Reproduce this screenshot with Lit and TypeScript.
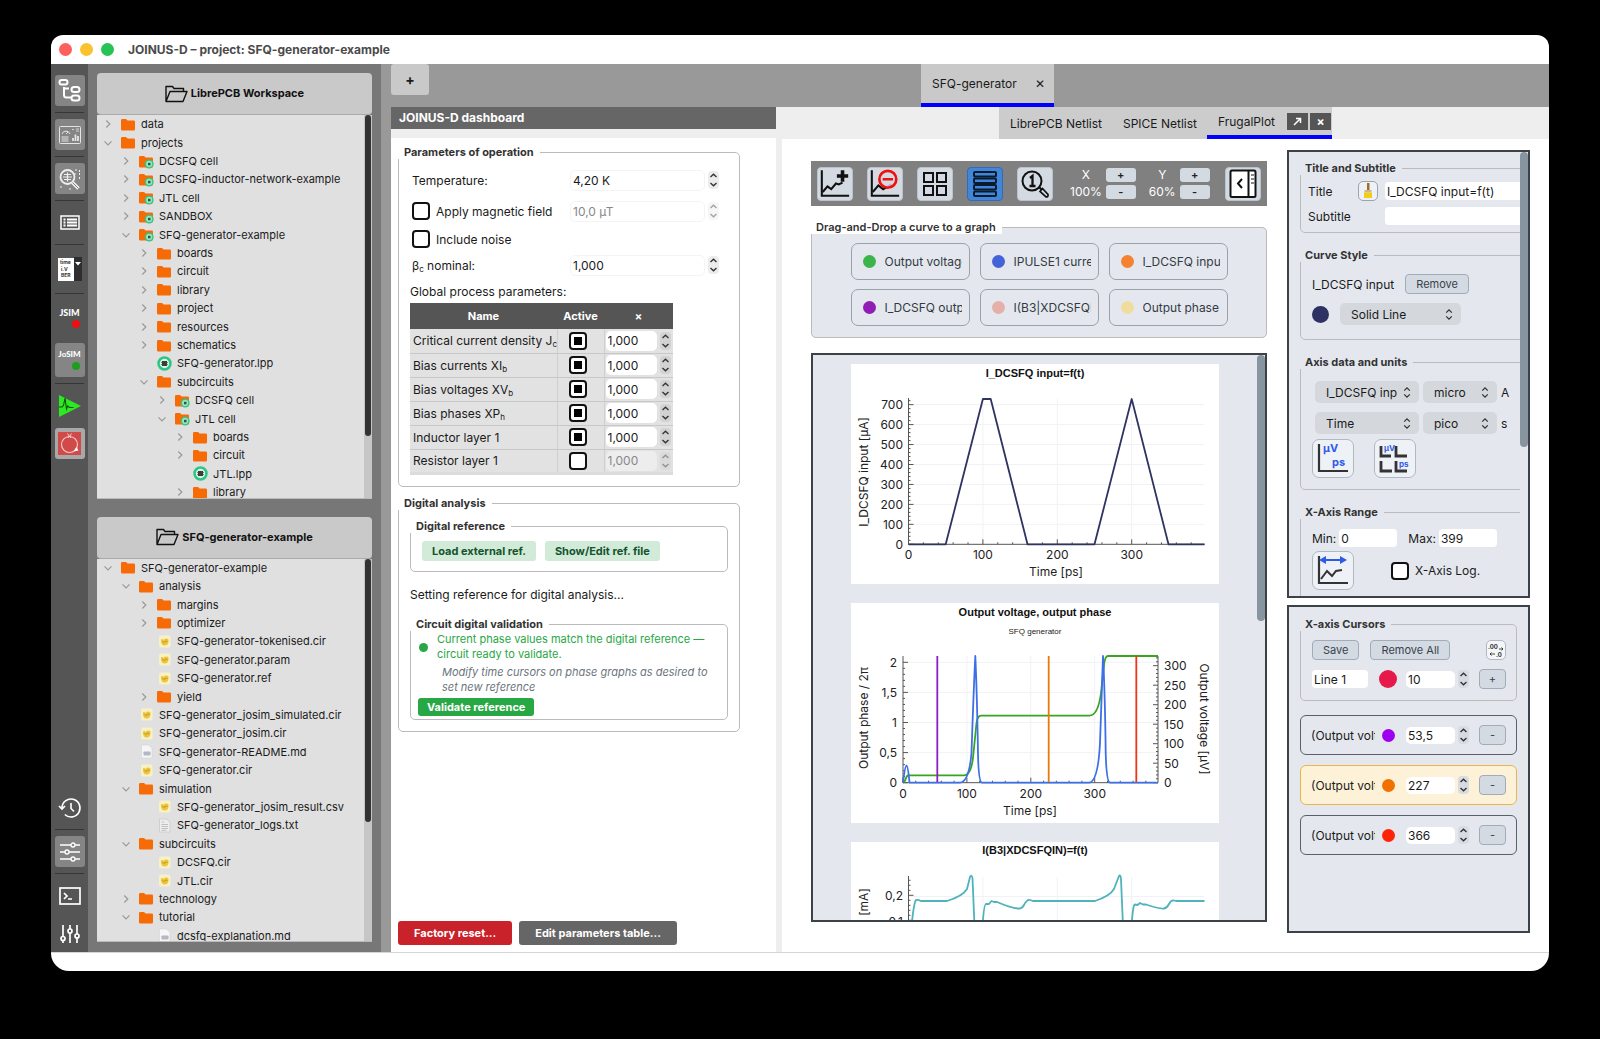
import { LitElement, html, svg, css, nothing } from "lit";
import { customElement } from "lit/decorators.js";
import { classMap } from "lit/directives/class-map.js";

type Kind = "folder" | "pcb" | "lpp" | "cir" | "md" | "txt";
interface Node { d: number; open?: boolean; kind: Kind; name: string }

const F = (d: number, name: string, open = false): Node => ({ d, name, open, kind: "folder" });
const P = (d: number, name: string, open = false): Node => ({ d, name, open, kind: "pcb" });
const L = (d: number, name: string, kind: Kind): Node => ({ d, name, kind });

const workspace: Node[] = [
  F(0, "data"), F(0, "projects", true), P(1, "DCSFQ cell"), P(1, "DCSFQ-inductor-network-example"),
  P(1, "JTL cell"), P(1, "SANDBOX"), P(1, "SFQ-generator-example", true), F(2, "boards"),
  F(2, "circuit"), F(2, "library"), F(2, "project"), F(2, "resources"), F(2, "schematics"),
  L(2, "SFQ-generator.lpp", "lpp"), F(2, "subcircuits", true), P(3, "DCSFQ cell"),
  P(3, "JTL cell", true), F(4, "boards"), F(4, "circuit"), L(4, "JTL.lpp", "lpp"), F(4, "library"),
];

const project: Node[] = [
  F(0, "SFQ-generator-example", true), F(1, "analysis", true), F(2, "margins"), F(2, "optimizer"),
  L(2, "SFQ-generator-tokenised.cir", "cir"), L(2, "SFQ-generator.param", "cir"), L(2, "SFQ-generator.ref", "cir"),
  F(2, "yield"), L(1, "SFQ-generator_josim_simulated.cir", "cir"), L(1, "SFQ-generator_josim.cir", "cir"),
  L(1, "SFQ-generator-README.md", "md"), L(1, "SFQ-generator.cir", "cir"), F(1, "simulation", true),
  L(2, "SFQ-generator_josim_result.csv", "cir"), L(2, "SFQ-generator_logs.txt", "txt"),
  F(1, "subcircuits", true), L(2, "DCSFQ.cir", "cir"), L(2, "JTL.cir", "cir"), F(1, "technology"),
  F(1, "tutorial", true), L(2, "dcsfq-explanation.md", "md"),
];

const folderShape = svg`<path d="M0 3.2Q0 2 1.2 2H5l1.6 1.6H12.8Q14 3.6 14 4.800V12.300Q14 13.500 12.800 13.500H1.200Q0 13.500 0 12.300Z" fill="#f76b07"/>`;

const kindIcon = (k: Kind) => {
  switch (k) {
    case "folder": return html`<svg viewBox="0 0 15 15">${folderShape}</svg>`;
    case "pcb": return html`<svg viewBox="0 0 15 15">${folderShape}<circle cx="10.200" cy="10" r="3.800" fill="#9be3bd" stroke="#2cc684" stroke-width="1.300"/><rect x="9" y="8.800" width="2.500" height="2.500" fill="#2d5a44"/></svg>`;
    case "lpp": return html`<svg viewBox="0 0 15 15"><circle cx="7.500" cy="7.500" r="6" fill="#d9f2e5" stroke="#2cc684" stroke-width="2.500"/><rect x="5" y="5" width="5" height="5" fill="#3a3f3c"/><path d="M4 6.500h7M4 8.500h7" stroke="#3a3f3c" stroke-width=".6"/></svg>`;
    case "cir": return html`<svg viewBox="0 0 15 15"><rect x="2" y="1.500" width="11.500" height="12" rx="2" fill="#f8f1c6"/><path d="M4 5.500Q5.500 4.500 6.500 6 9 3.500 11.500 5.500 12 8 10.500 10.500 7.500 12.500 5 10.500 3.500 8 4 5.500Z" fill="#ecc53d"/><path d="M5.500 7.500l1.500 1 2-1.500 1.500.5" fill="none" stroke="#b98a1c" stroke-width=".8"/></svg>`;
    case "md": return html`<svg viewBox="0 0 15 15"><path d="M2.500 1h7l3.500 3.500V14h-10.500Z" fill="#f6f6f6" stroke="#d4d4d4" stroke-width=".6"/><rect x="4.500" y="7.500" width="7" height="4" rx=".8" fill="#b4b8c2"/></svg>`;
    case "txt": return html`<svg viewBox="0 0 15 15"><path d="M2.500 1h7l3.500 3.500V14h-10.500Z" fill="#eee" stroke="#c6c6c6" stroke-width=".7"/><path d="M4.500 4h3M4.500 6.500h6.500M4.500 8.500h6.500M4.500 10.500h6.500M4.500 12.300h5" stroke="#b5b5b5" stroke-width=".8"/></svg>`;
  }
};

const chevron = (open?: boolean) => html`<svg viewBox="0 0 10 10"><path d=${open ? "M1.500 3.300 5 6.800 8.500 3.300" : "M3.300 1.500 6.800 5 3.300 8.500"} fill="none" stroke="#999" stroke-width="1.200"/></svg>`;

const upDown = html`<svg class="updown" viewBox="0 0 10 14"><path d="M2 5 5 2l3 3M2 9l3 3 3-3" fill="none" stroke="#333" stroke-width="1.400"/></svg>`;

const base = css`
  :host { box-sizing: border-box; }
  * { box-sizing: border-box; }
  button, input, select { font: inherit; color: inherit; margin: 0; padding: 0; border: 0; background: none; }
  button { cursor: pointer; display: inline-flex; align-items: center; justify-content: center; white-space: nowrap; }
  input { min-width: 0; outline: none; }
  svg { display: block; }
  fieldset { min-width: 0; margin: 0; padding: 0; border: 1px solid #bbb; border-radius: 5px; }
  legend { font-size: 11px; font-weight: 700; color: #333; line-height: 14px; padding: 0 6px; margin-left: -1px; background: var(--legend-bg, #fff); }
  input[type="checkbox"] { appearance: none; width: 18px; height: 18px; flex: none; border: 2px solid #111; border-radius: 4px; background: #fff; display: grid; place-content: center; }
  input[type="checkbox"]:checked::before { content: ""; width: 8px; height: 8px; background: #000; }
  sub { font-size: 8px; line-height: 0; vertical-align: -2px; }
  .spin { display: flex; align-items: center; gap: 3px; min-width: 0; }
  .spin input { flex: 1; width: 0; height: 20px; padding: 0 2px; border-radius: 5px; background: #fff; }
  .steps { display: grid; width: 11px; height: 18px; flex: none; border-radius: 4px; background: #ececec; }
  .steps svg { width: 9px; height: 5px; }
  .off { color: #888; }
  .off .steps { opacity: .45; }
  .pick { display: grid; align-items: center; }
  .pick select { grid-area: 1 / 1; width: 100%; height: 22px; padding: 0 20px 0 11px; border-radius: 5px; background: #d4d8dd; appearance: none; text-overflow: clip; }
  .pick .updown { grid-area: 1 / 1; justify-self: end; width: 10px; height: 13px; margin-right: 7px; pointer-events: none; }
`;

const spin = (label: string, value: string, off = false) => html`
  <div class=${classMap({ spin: true, off })}>
    <input type="text" aria-label=${label} .value=${value} ?disabled=${off} />
    <div class="steps">
      <button aria-label="Increase" ?disabled=${off}><svg viewBox="0 0 9 5"><path d="M1.500 4 4.500 1.300 7.500 4" fill="none" stroke="#333" stroke-width="1.400"/></svg></button>
      <button aria-label="Decrease" ?disabled=${off}><svg viewBox="0 0 9 5"><path d="M1.500 1 4.500 3.700 7.500 1" fill="none" stroke="#333" stroke-width="1.400"/></svg></button>
    </div>
  </div>`;

@customElement("tool-rail")
class ToolRail extends LitElement {
  static styles = [base, css`
    :host { display: flex; flex-direction: column; align-items: center; width: 37px; flex: none; padding: 11px 0 3px; background: #555; color: #fff; }
    button { width: 30px; height: 31px; border-radius: 3px; flex: none; }
    .on { background: #858585; }
    .tall { height: 36px; }
    .sep { width: 29px; height: 1px; margin: 6px 0; flex: none; background: #363636; }
    .space { flex: 1; }
    .gap { height: 7px; flex: none; }
    .sim { flex-direction: column; gap: 3px; font: 900 9px/9px Lato, sans-serif; }
    .small { height: 34px; font-size: 8px; }
    .dot { width: 8px; height: 8px; border-radius: 4px; align-self: flex-end; margin-right: 5px; background: #f00f0f; }
    .ok { background: #1f9e1b; }
    .err { background: #a8a8a8; }
  `];
  render() {
    return html`
      <button class="on" aria-label="Project tree"><svg width="24" height="25" viewBox="0 0 24 25" fill="none" stroke="#fff" stroke-width="2"><rect x="1.500" y="2" width="8" height="4.500" rx="2.200"/><path d="M6 9v8q0 2.500 2.500 2.500H13M5 10.500h6"/><rect x="13.500" y="9" width="8" height="5" rx="2.500"/><rect x="13.500" y="17.500" width="8" height="5" rx="2.500"/></svg></button>
      <div class="sep"></div>
      <button class="on" aria-label="Dashboard"><svg width="24" height="20" viewBox="0 0 24 20" fill="none" stroke="#e4e4e4"><rect x="1.500" y="1.500" width="21" height="17" rx="1"/><path d="M4 9a4.200 4.200 0 0 1 8 0M8 9l2-2M3.500 12h7M3.500 14h7M3.500 16h7"/><path d="M15 16v-3M17.500 16V9.500M20 16v-5" stroke-width="1.800"/><path d="M14 4.500h2M18 4h3M18 6h3" stroke-width=".8"/></svg></button>
      <div class="sep"></div>
      <button class="on" aria-label="Inspect circuit"><svg width="24" height="24" viewBox="0 0 24 24" fill="none" stroke="#eee"><circle cx="9.500" cy="10" r="7" stroke-width="1.800"/><path d="M5 10h9M9.500 5.500v9M6 7.500h7M6 12.500h7" stroke-width="1.200"/><path d="M14.500 15.500l6 6" stroke-width="3.500"/><path d="M14.500 15.500l6 6" stroke="#858585" stroke-width="1"/><path d="M17 3h2M21.500 3v5M21.500 10v2M17 6v3M3 19v3M12 21v2" stroke-dasharray="2 1"/></svg></button>
      <div class="sep"></div>
      <button aria-label="Table"><svg width="20" height="15" viewBox="0 0 20 15" fill="none" stroke="#fff" stroke-width="1.500"><rect x="1" y="1" width="18" height="13"/><path d="M3.500 4.500h2M7 4.500h10M3.500 7.500h2M7 7.500h10M3.500 10.500h2M7 10.500h10" stroke-width="1.800"/></svg></button>
      <div class="sep"></div>
      <button class="tall" aria-label="Time and variables"><svg width="26" height="24" viewBox="0 0 26 24"><rect x="17" width="8" height="24" fill="#2e2e2e"/><rect x="1" y="1" width="16" height="23" fill="#fff"/><path d="M18 5h6l-3 3.500Z" fill="#fff"/><g font-family="Inter, sans-serif" font-weight="700" font-size="5" fill="#333"><text x="3" y="7">time</text><text x="4" y="14">i.V</text><text x="4" y="20">BER</text></g></svg></button>
      <div class="sep"></div>
      <button class="tall sim">JSIM<span class="dot"></span></button>
      <div class="gap"></div>
      <button class="sim small on">JoSIM<span class="dot ok"></span></button>
      <div class="sep"></div>
      <button aria-label="Run simulation"><svg width="24" height="24" viewBox="0 0 24 24"><path d="M1 1 23 12 1 23Z" fill="#2bea22"/><path d="M1 13h3l1.500-1.500L7 4l1.500 11 1.200-3 1.800 1.500h4" fill="none" stroke="#124d10" stroke-width="1.100"/></svg></button>
      <div class="gap"></div>
      <button class="err" aria-label="Reset loop"><svg width="23" height="23" viewBox="0 0 23 23"><rect width="23" height="23" fill="#d14a4a"/><circle cx="11.500" cy="12.500" r="8" fill="none" stroke="#f3cfcf" stroke-width="1.100"/><path d="M9.500 1.500l2 3 2-3M10 6l1.500-2L13 6" fill="none" stroke="#f3cfcf"/><path d="M15.500 19.500l5-1-2-3.500Z" fill="#fff"/></svg></button>
      <div class="space"></div>
      <button aria-label="History"><svg width="24" height="22" viewBox="0 0 24 22" fill="none" stroke="#fff" stroke-width="1.600"><path d="M4 11a9 9 0 1 1 2.800 6.500"/><path d="M1 9l3 3 3-3" /><path d="M13 6v5.500l3 3"/></svg></button>
      <div class="sep"></div>
      <button class="on" aria-label="Parameters"><svg width="20" height="20" viewBox="0 0 20 20" fill="#858585" stroke="#fff" stroke-width="1.300"><path d="M0 3h20M0 10h20M0 17h20"/><circle cx="13" cy="3" r="2"/><circle cx="7" cy="10" r="2"/><circle cx="13" cy="17" r="2"/></svg></button>
      <div class="sep"></div>
      <button aria-label="Terminal"><svg width="22" height="18" viewBox="0 0 22 18" fill="none" stroke="#fff" stroke-width="1.700"><rect x="1" y="1" width="20" height="16"/><path d="M5 6l3 3-3 3M9 12h4"/></svg></button>
      <div class="gap"></div>
      <button aria-label="Settings"><svg width="20" height="20" viewBox="0 0 20 20" fill="#555" stroke="#fff" stroke-width="1.700"><path d="M3 1v18M10 1v18M17 1v18"/><circle cx="3" cy="14.500" r="2"/><circle cx="10" cy="7" r="2"/><circle cx="17" cy="12" r="2"/></svg></button>`;
  }
}

@customElement("file-panel")
class FilePanel extends LitElement {
  static properties = { heading: {}, nodes: { attribute: false }, thumb: { type: Number } };
  declare heading: string; declare nodes: Node[]; declare thumb: number;
  static styles = [base, css`
    :host { display: flex; flex-direction: column; flex: 1 1 0; min-height: 0; font-size: 11px; }
    header { display: flex; align-items: center; justify-content: center; gap: 3px; height: 42px; flex: none; font-weight: 700; color: #111; background: #c9c9c9; border-radius: 4px; border-bottom: 1px solid #aaa; }
    .body { display: flex; flex: 1; min-height: 0; overflow: hidden; background: #e0e0e0; border-bottom: 1px solid #bbb; }
    ul { list-style: none; flex: 1; min-width: 0; display: grid; grid-auto-rows: 1fr; margin: 0 0 -4px; padding: 0; }
    li { display: flex; align-items: center; min-height: 0; padding-left: 6px; white-space: nowrap; line-height: 16px; }
    .tw { width: 10px; height: 10px; margin-right: 8px; }
    .ic { width: 15px; height: 15px; margin-right: 5px; }
    .indent { width: 18px; }
    .track { width: 8px; background: #c6c6c6; }
    .thumb { width: 6px; margin-left: 1px; border-radius: 3px; background: #333; }
  `];
  render() {
    return html`
      <header><svg width="23" height="18" viewBox="0 0 23 18" fill="none" stroke="#111" stroke-width="1.400" stroke-linejoin="round"><path d="M1 16.500V1.500h6.500l1.500 2h9.500v3M1 16.500 5 6.500h17L18 16.500Z"/></svg>${this.heading}</header>
      <div class="body">
        <ul>${this.nodes.map((n) => html`<li>
          ${Array.from({ length: n.d }, () => html`<span class="indent"></span>`)}
          <span class="tw">${n.kind === "folder" || n.kind === "pcb" ? chevron(n.open) : nothing}</span>
          <span class="ic">${kindIcon(n.kind)}</span>${n.name}</li>`)}</ul>
        <div class="track"><div class="thumb" style="height:${this.thumb}%"></div></div>
      </div>`;
  }
}

@customElement("dash-board")
class DashBoard extends LitElement {
  static styles = [base, css`
    :host { display: flex; flex-direction: column; width: 385px; flex: none; background: #fff; }
    h2 { margin: 0; height: 22px; padding-left: 8px; font-size: 12px; line-height: 22px; background: #666; color: #fff; }
    .strip { height: 9px; background: #eee; }
    .main { flex: 1; display: flex; flex-direction: column; padding: 7px 36px 7px 7px; }
    .ops { height: 342px; padding: 7px 20px 0 11px; margin-bottom: 9px; }
    .ops > legend, .ana > legend { margin-left: -12px; }
    .valid > legend { margin-left: -8px; }
    .grid { display: grid; grid-template-columns: 158px 1fr; grid-template-rows: 28px 34px 22px 30px; align-items: center; padding-left: 2px; }
    .grid .spin input { border: 1px solid #f4f4f4; height: 21px; }
    label { display: flex; align-items: center; gap: 6px; }
    .wide { grid-column: 1 / -1; }
    .cap { line-height: 20px; margin: 2px 0 1px; }
    table { width: 263px; border-collapse: collapse; background: #e2e2e2; border-bottom: 3px solid #dcdcdc; table-layout: fixed; }
    th { height: 26px; padding: 0; background: #555; color: #fff; font-size: 11px; }
    td { height: 24px; padding: 0 0 0 3px; border-bottom: 1px solid #c8c8c8; border-right: 1px solid #cfcfcf; white-space: nowrap; }
    td:nth-child(2) { padding: 0 5px 0 0; }
    td:nth-child(3) { padding: 0 2px 0 1px; border-right: 0; }
    td input[type="checkbox"] { margin: 0 auto; }
    td .steps { background: #d2d2d2; }
    td .off input { background: #ededed; }
    .ana { height: 236px; padding: 0 11px; }
    .lead { height: 9px; }
    .ref { height: 38px; display: flex; gap: 9px; padding: 8px 11px 0; }
    .ref button { height: 20px; padding: 0 10px; border-radius: 3px; background: #d1ebd8; color: #14532d; font-size: 11px; font-weight: 700; }
    p { margin: 0; line-height: 15px; }
    .note { padding: 15px 0; }
    .valid { height: 103px; padding: 1px 0 0 7px; }
    .status { display: flex; gap: 9px; color: #28a745; padding-left: 1px; font-size: 11px; }
    .bullet { width: 9px; height: 9px; border-radius: 5px; margin-top: 11px; background: #28a745; flex: none; }
    .hint { font-style: italic; font-size: 11px; color: #6c757d; padding: 3px 4px 3px 24px; }
    .go { height: 18px; padding: 0 9px; border-radius: 3px; background: #28a745; color: #fff; font-size: 11px; font-weight: 700; }
    .foot { display: flex; gap: 7px; margin-top: auto; }
    .foot button { height: 24px; padding: 0 16px; border-radius: 3px; color: #fff; background: #666; font-size: 11px; font-weight: 700; }
    .foot .red { background: #c9222b; }
  `];
  render() {
    const rows: [unknown, boolean][] = [
      [html`Critical current density J<sub>c</sub>`, true], [html`Bias currents XI<sub>b</sub>`, true],
      [html`Bias voltages XV<sub>b</sub>`, true], [html`Bias phases XP<sub>h</sub>`, true],
      ["Inductor layer 1", true], ["Resistor layer 1", false],
    ];
    return html`
      <h2>JOINUS-D dashboard</h2><div class="strip"></div>
      <div class="main">
        <fieldset class="ops"><legend>Parameters of operation</legend>
          <div class="grid">
            <span>Temperature:</span>${spin("Temperature", "4,20 K")}
            <label><input type="checkbox" />Apply magnetic field</label>${spin("Magnetic field", "10,0 µT", true)}
            <label class="wide"><input type="checkbox" />Include noise</label>
            <span>β<sub>c</sub> nominal:</span>${spin("βc nominal", "1,000")}
          </div>
          <div class="cap">Global process parameters:</div>
          <table>
            <colgroup><col width="147" /><col width="47" /><col width="69" /></colgroup>
            <thead><tr><th>Name</th><th>Active</th><th>×</th></tr></thead>
            <tbody>${rows.map(([n, on]) => html`<tr><td>${n}</td><td><input type="checkbox" aria-label="Active" .checked=${on} /></td><td>${spin("Factor", "1,000", !on)}</td></tr>`)}</tbody>
          </table>
        </fieldset>
        <fieldset class="ana"><legend>Digital analysis</legend>
          <div class="lead"></div>
          <fieldset><legend>Digital reference</legend>
            <div class="ref"><button>Load external ref.</button><button>Show/Edit ref. file</button></div>
          </fieldset>
          <p class="note">Setting reference for digital analysis...</p>
          <fieldset class="valid"><legend>Circuit digital validation</legend>
            <div class="status"><span class="bullet"></span><p>Current phase values match the digital reference — circuit ready to validate.</p></div>
            <p class="hint">Modify time cursors on phase graphs as desired to set new reference</p>
            <button class="go">Validate reference</button>
          </fieldset>
        </fieldset>
        <div class="foot"><button class="red">Factory reset...</button><button>Edit parameters table...</button></div>
      </div>`;
  }
}

const range = (n: number, step: number) => Array.from({ length: Math.floor(n / step) + 1 }, (_, i) => i * step);

@customElement("plot-stack")
class PlotStack extends LitElement {
  static styles = [base, css`
    :host { display: flex; flex: 1; min-height: 0; overflow: hidden; border: 2px solid #3d4247; background: #e4e8ee; }
    .list { flex: 1; min-width: 0; padding: 9px 38px 0; display: flex; flex-direction: column; gap: 19px; }
    .plot { width: 100%; flex: none; background: #fff; }
    .thumb { width: 8px; height: 266px; flex: none; border-radius: 4px; background: #8795a1; }
    text { font: 12px Inter, sans-serif; fill: #222; }
    .t { font: 700 11px "Liberation Sans", sans-serif; fill: #111; }
    .st { font: 8px "Liberation Sans", sans-serif; }
    .m { text-anchor: middle; }
    .e { text-anchor: end; }
    .g { stroke: #f1f2f6; fill: none; }
    .ax { stroke: #555; fill: none; stroke-width: 1; }
    .c { fill: none; stroke-width: 1.800; stroke-linejoin: round; }
  `];
  xAxis(x0: number, y0: number, k: number, top: number, end: number) {
    return svg`
      ${[100, 200, 300].map((v) => svg`<path class="g" d="M${x0 + v * k} ${top}V${y0}"/>`)}
      <path class="ax" d="M${x0} ${y0}H${end}${range(380, 20).map((v) => `M${x0 + v * k} ${y0}v${v % 100 ? -2 : -5}`).join("")}"/>
      ${[0, 100, 200, 300].map((v) => svg`<text class="m" x=${x0 + v * k} y=${y0 + 15}>${v}</text>`)}`;
  }
  render() {
    return html`<div class="list">
      <svg class="plot" viewBox="0 0 368 220" role="img" aria-label="I_DCSFQ input">
        <text class="t m" x="184" y="13">I_DCSFQ input=f(t)</text>
        ${range(700, 100).slice(1).map((v) => svg`<path class="g" d="M58 ${180.3 - v * 0.1995}H353"/>`)}
        ${this.xAxis(57.5, 180.3, 0.744, 35, 353.5)}
        <path class="ax" d="M57.500 34V180.300${range(720, 20).map((v) => `M57.5 ${180.3 - v * 0.1995}h${v % 100 ? 2 : 5}`).join("")}"/>
        ${range(700, 100).map((v) => svg`<text class="e" x="52" y=${184.5 - v * 0.1995}>${v}</text>`)}
        <path class="c" stroke="#2f3361" d="M57.500 180.300H94.700L131.900 35H139.700L176.500 180.300H243.500L280.700 35 317.500 180.300H353.500"/>
        <text class="m" x="205" y="212">Time [ps]</text>
        <text class="m" transform="translate(17 108) rotate(-90)">I_DCSFQ input [µA]</text>
      </svg>
      <svg class="plot" viewBox="0 0 368 220" role="img" aria-label="Output voltage and phase">
        <text class="t m" x="184" y="13">Output voltage, output phase</text>
        <text class="st m" x="184" y="31">SFQ generator</text>
        ${[0.5, 1, 1.5, 2].map((v) => svg`<path class="g" d="M52 ${179.7 - v * 60.2}H307"/>`)}
        ${this.xAxis(52, 179.7, 0.639, 53, 307)}
        <path class="ax" d="M52 53V179.700${range(20, 1).map((v) => `M52 ${179.7 - v * 6.02}h${v % 5 ? 2 : 5}`).join("")}"/>
        <path class="ax" d="M307 53V179.700${range(320, 10).map((v) => `M307 ${179.7 - v * 0.39}h${v % 50 ? -2 : -5}`).join("")}"/>
        ${["0", "0,5", "1", "1,5", "2"].map((v, i) => svg`<text class="e" x="46" y=${184 - i * 30.1}>${v}</text>`)}
        ${range(300, 50).map((v) => svg`<text x="313" y=${184 - v * 0.39}>${v}</text>`)}
        <path class="c" stroke="#37a51f" d="M52 179.700Q54 179 55 175 56 172 58.500 172.300H113Q120 172 122 155L125.500 120Q126.500 112.700 130 112.700H238Q247 113 250 90L253 62Q254 53 257 53H307"/>
        <path class="c" stroke="#3d6fe8" fill="#3d6fe8" fill-opacity=".2" d="M52 179.700Q54 163 55.500 162.700 57 163 58.500 179.700H109Q118 179 120.500 150 122.500 90 124.300 53 126 90 127 150 127.500 179 131 179.700H238Q247 179 249 140 251 80 252 53 254 90 254.700 150 255.500 179 259 179.700H307"/>
        <path class="c" stroke="#8a1fc4" d="M86.300 53V179"/><path class="c" stroke="#e87a10" d="M197.700 53V179"/><path class="c" stroke="#ef3418" d="M285.300 53V179"/>
        <text class="m" x="179" y="212">Time [ps]</text>
        <text class="m" transform="translate(17 115) rotate(-90)">Output phase / 2π</text>
        <text class="m" transform="translate(349 116) rotate(90)">Output voltage [µV]</text>
      </svg>
      <svg class="plot" viewBox="0 0 368 220" role="img" aria-label="I(B3|XDCSFQIN)">
        <text class="t m" x="184" y="12">I(B3|XDCSFQIN)=f(t)</text>
        <path class="g" d="M58 54.500H353M131.900 35V180M206.300 35V180M280.700 35V180"/>
        <path class="ax" d="M57.500 34V180M57.500 53.300h5M57.500 78.300h5M57.500 38.300h2M57.500 43.300h2M57.500 48.300h2M57.500 58.300h2M57.500 63.300h2M57.500 68.300h2M57.500 73.300h2"/>
        <text class="e" x="52" y="58">0,2</text><text class="e" x="52" y="84">0,1</text>
        <path class="c" stroke="#4fb3bb" d="M60.500 84Q63 60 65 58 67 57.500 70 59H96Q112 54 116 47 118 39 119 35 120.500 32 121.500 36L123.500 84M131.500 84Q133 62 135 62L138 62 140.500 59 143 60H146Q160 66 167 66.500 171 67 173 63 176 57 179 58L182 59H244Q259 54 263 47 266 39 268 34 269.500 32 270 37L272 84M280.500 84Q282 62 284 62.500L286.500 63 289 61 292 62.500H295Q308 67 313 66.500 316 66 318 62 320 58 323 58.500L325 59H353.500"/>
        <text class="m" transform="translate(17 60) rotate(-90)">[mA]</text>
      </svg>
    </div><div class="thumb"></div>`;
  }
}

const chartAxes = (c = "#111") => svg`<path d="M3 1V28H32" fill="none" stroke=${c} stroke-width="2.200"/>`;

@customElement("plot-view")
class PlotView extends LitElement {
  static styles = [base, css`
    :host { display: flex; flex-direction: column; flex: 1; min-width: 0; }
    .bar { display: flex; align-items: center; height: 45px; flex: none; padding: 0 6px; background: #808080; margin-bottom: 14px; }
    .tools { display: flex; gap: 14px; margin-right: 17px; }
    .tool { width: 36px; height: 34px; border-radius: 4px; background: #d3dae2; border: 1px solid #b9c2cd; }
    .sel { background: #4186d8; border-color: #2f6db8; }
    .end { margin-left: auto; }
    .zoom { display: grid; grid-template-columns: auto 30px; align-items: center; column-gap: 4px; row-gap: 3px; margin-right: 13px; color: #fff; text-align: center; line-height: 14px; }
    .zoom button { height: 14px; border-radius: 3px; background: #d3dae2; color: #222; font-weight: 600; font-size: 11px; line-height: 14px; }
    fieldset { background: #e4e8ee; margin-bottom: 15px; flex: none; }
    legend { font-weight: 600; padding-left: 5px; }
    .chips { display: grid; grid-template-columns: repeat(3, 119px); justify-content: center; column-gap: 10px; row-gap: 9px; padding: 9px 0 11px; }
    .chip { height: 37px; display: flex; align-items: center; gap: 9px; padding: 0 7px 0 11px; border: 1px solid #99a1aa; border-radius: 7px; color: #333a44; }
    .dot { width: 13px; height: 13px; border-radius: 7px; flex: none; }
    .lab { flex: 1; overflow: hidden; white-space: nowrap; }
  `];
  render() {
    const chips = [["#3cb44b", "Output voltage"], ["#4363d8", "IPULSE1 current"], ["#f58231", "I_DCSFQ input"], ["#911eb4", "I_DCSFQ output"], ["#e6b0aa", "I(B3|XDCSFQIN)"], ["#f0dc9c", "Output phase"]];
    return html`
      <div class="bar">
        <div class="tools">
          <button class="tool" aria-label="Add graph"><svg width="32" height="30" viewBox="0 0 34 31" fill="none" stroke="#111" stroke-width="2.200">${chartAxes()}<path d="M4 24l5-6 4 3 5-6 3 1 4-2"/><path d="M25 1v12M19 7h12" stroke-width="3.800"/></svg></button>
          <button class="tool" aria-label="Remove graph"><svg width="32" height="30" viewBox="0 0 34 31" fill="none" stroke="#111" stroke-width="2.200">${chartAxes()}<path d="M4 24l6-7 5 4 9-5"/><circle cx="20" cy="10.500" r="9" fill="#d3dae2" fill-opacity=".8" stroke="#f01010" stroke-width="2.800"/><path d="M14.500 10.500h11" stroke="#f01010" stroke-width="2.800"/></svg></button>
          <button class="tool" aria-label="Grid layout"><svg width="26" height="26" viewBox="0 0 26 26" fill="none" stroke="#111" stroke-width="2"><rect x="2" y="2" width="9" height="9"/><rect x="15" y="2" width="9" height="9"/><rect x="2" y="15" width="9" height="9"/><rect x="15" y="15" width="9" height="9"/></svg></button>
          <button class="tool sel" aria-label="Stacked layout"><svg width="26" height="28" viewBox="0 0 26 28" fill="none" stroke="#0b1a2d" stroke-width="2"><rect x="2" y="2" width="22" height="4.500" rx="1"/><rect x="2" y="8.500" width="22" height="4.500" rx="1"/><rect x="2" y="15" width="22" height="4.500" rx="1"/><rect x="2" y="21.500" width="22" height="4.500" rx="1"/></svg></button>
          <button class="tool" aria-label="Reset zoom"><svg width="30" height="30" viewBox="0 0 30 30" fill="none" stroke="#111" stroke-width="2"><circle cx="12" cy="12" r="9.500"/><path d="M19 18l2.500 2.500"/><path d="M22.500 19.500l5.500 6q.5 2.500-2 2.500l-6-5.500Z" stroke-width="1.700"/><path d="M10 9l2.500-2v10M9.500 17h6" stroke-width="2.300"/></svg></button>
        </div>
        <div class="zoom"><span>X</span><button>+</button><span>100%</span><button>-</button></div>
        <div class="zoom"><span>Y</span><button>+</button><span>60%</span><button>-</button></div>
        <button class="tool end" aria-label="Toggle side panel"><svg width="28" height="30" viewBox="0 0 28 30" fill="#fff" stroke="#111" stroke-width="2"><rect x="1.500" y="1.500" width="25" height="26.500" rx="1.500"/><path d="M19.500 2v26"/><path d="M13 10l-4 4.500 4 4.500" fill="none"/><path d="M22 6h3M22 10h3M22 14h3" stroke-width="1.200"/></svg></button>
      </div>
      <fieldset><legend>Drag-and-Drop a curve to a graph</legend>
        <div class="chips">${chips.map(([c, n]) => html`<div class="chip" draggable="true"><span class="dot" style="background:${c}"></span><span class="lab">${n}</span></div>`)}</div>
      </fieldset>
      <plot-stack></plot-stack>`;
  }
}

@customElement("plot-settings")
class PlotSettings extends LitElement {
  static styles = [base, css`
    :host { --legend-bg: #e4e8ee; display: flex; flex-direction: column; gap: 7px; width: 243px; flex: none; margin-top: -11px; }
    .panel { border: 2px solid #3d4247; background: #e4e8ee; display: flex; overflow: hidden; }
    .top { height: 448px; flex: none; }
    .bottom { flex: 1; flex-direction: column; gap: 10px; padding: 10px 11px 0; }
    .scroll { flex: 1; min-width: 0; overflow: hidden; padding: 9px 0 0 11px; display: flex; flex-direction: column; gap: 15px; }
    .scroll fieldset { margin-right: -20px; flex: none; }
    .thumb { width: 8px; height: 295px; border-radius: 4px; background: #8795a1; flex: none; }
    legend { padding-left: 5px; }
    .field { height: 18px; padding: 0 2px; border-radius: 4px; background: #fff; }
    .btn { height: 20px; padding: 0 10px; border: 1px solid #a0acb9; border-radius: 4px; background: #d3dae2; color: #38424e; font-size: 11px; }
    .row { display: flex; align-items: center; }
    .titles { display: grid; grid-template-columns: 50px 27px 1fr; align-items: center; row-gap: 6px; padding: 6px 0 7px 7px; }
    .brush { width: 20px; height: 20px; border: 1px solid #9aa5b1; border-radius: 5px; background: #eef1f5; }
    .style { padding: 12px 0 14px 11px; display: grid; gap: 9px; }
    .style .row { gap: 11px; }
    .dot { width: 17px; height: 17px; border-radius: 9px; flex: none; }
    .line { width: 121px; }
    .axes { padding: 12px 0 11px 11px; }
    .units { display: grid; grid-template-columns: 104px 74px auto; column-gap: 4px; row-gap: 9px; align-items: center; justify-content: start; padding: 0 0 5px 3px; }
    .big { width: 42px; height: 39px; border: 1px solid #b0b8c2; border-radius: 7px; background: #eef1f5; }
    .apply { gap: 20px; }
    .range { padding: 10px 0 20px 11px; }
    .range .field { width: 58px; margin: 0 11px 0 3px; }
    .range label { display: flex; align-items: center; }
    .log { gap: 6px; margin-left: 37px; }
    .fit { padding-top: 4px; }
    .cursors { padding: 9px 10px 11px 11px; display: grid; gap: 9px; }
    .all { margin-left: 11px; }
    .grow { margin-left: auto; }
    .tiny { width: 20px; height: 20px; border: 1px solid #b0b8c2; border-radius: 5px; background: #f4f6f8; }
    .pm { width: 27px; padding: 0; }
    .spin { width: 63px; }
    .spin input { height: 17px; }
    .steps { background: #d8dce2; }
    .name { width: 56px; }
    .card { display: flex; align-items: center; height: 40px; flex: none; padding: 0 10px; border: 1px solid #5a6068; border-radius: 6px; }
    .card.hot { background: #fdf2d8; border-color: #eab54a; }
    .card .lab { width: 64px; overflow: hidden; white-space: nowrap; }
    .card .dot { width: 13px; height: 13px; margin: 0 11px 0 7px; }
    .first { margin-top: 4px; }
    .mark { width: 18px; height: 18px; margin: 0 9px 0 11px; background: #e6194b; }
  `];
  pick(label: string, value: string, cls = "") {
    return html`<div class="pick ${cls}"><select aria-label=${label}><option>${value}</option></select>${upDown}</div>`;
  }
  render() {
    const cards: [string, string, string, boolean][] = [["#a000f0", "53,5", "first", false], ["#f07000", "227", "", true], ["#ff2408", "366", "", false]];
    return html`
      <section class="panel top"><div class="scroll">
        <fieldset><legend>Title and Subtitle</legend><div class="titles">
          <label for="ti">Title</label><button class="brush" aria-label="Title style"><svg width="12" height="16" viewBox="0 0 12 16"><path d="M5 0h2.500v7H5Z" fill="#a86a2c"/><path d="M2.500 7h7v2.500h-7Z" fill="#c9b98a"/><path d="M2 9.500h8V15H2Z" fill="#f0cf1c"/></svg></button><input id="ti" class="field" .value=${"I_DCSFQ input=f(t)"} />
          <label for="su">Subtitle</label><span></span><input id="su" class="field" />
        </div></fieldset>
        <fieldset><legend>Curve Style</legend><div class="style">
          <div class="row"><span>I_DCSFQ input</span><button class="btn">Remove</button></div>
          <div class="row"><span class="dot" style="background:#2d3163"></span>${this.pick("Line style", "Solid Line", "line")}</div>
        </div></fieldset>
        <fieldset><legend>Axis data and units</legend><div class="axes">
          <div class="units">${this.pick("Y data", "I_DCSFQ inp")}${this.pick("Y prefix", "micro")}<span>A</span>${this.pick("X data", "Time")}${this.pick("X prefix", "pico")}<span>s</span></div>
          <div class="row apply">
            <button class="big" aria-label="Apply units"><svg width="34" height="32" viewBox="0 0 34 32">${chartAxes("#333")}<g font-family="Inter, sans-serif" font-weight="700" font-size="11" fill="#2f5bea"><text x="7" y="9">µV</text><text x="16" y="23">ps</text></g></svg></button>
            <button class="big" aria-label="Apply units to all"><svg width="34" height="32" viewBox="0 0 34 32"><path d="M3 3v10h10M18 3v10h11M3 18v10h11M18 18v10h11" fill="none" stroke="#333" stroke-width="2.800"/><g font-family="Inter, sans-serif" font-weight="700" font-size="8" fill="#2f5bea"><text x="6" y="8">µV</text><text x="21" y="24">ps</text></g></svg></button>
          </div>
        </div></fieldset>
        <fieldset><legend>X-Axis Range</legend><div class="range">
          <div class="row"><label>Min:<input class="field" .value=${"0"} /></label><label>Max:<input class="field" .value=${"399"} /></label></div>
          <div class="row fit"><button class="big" aria-label="Fit X axis"><svg width="34" height="32" viewBox="0 0 34 32">${chartAxes("#333")}<path d="M5 24l6-8 5 5 4-5 6-1" fill="none" stroke="#333" stroke-width="2"/><path d="M8 5h17" stroke="#2f5bea" stroke-width="2"/><path d="M3 5l7-4v8ZM31 5l-7-4v8Z" fill="#2f5bea"/></svg></button><label class="log"><input type="checkbox" />X-Axis Log.</label></div>
        </div></fieldset>
      </div><div class="thumb"></div></section>
      <section class="panel bottom">
        <fieldset><legend>X-axis Cursors</legend><div class="cursors">
          <div class="row"><button class="btn">Save</button><button class="btn all">Remove All</button><button class="tiny grow" aria-label="Decimals"><svg width="16" height="15" viewBox="0 0 16 15"><g font-family="Inter, sans-serif" font-weight="700" font-size="6" fill="#333"><text x="0" y="6">.00</text><text x="8" y="14">.0</text></g><path d="M11 6h4M13.500 4.500 15 6l-1.500 1.500M7 11H2M3.500 9.500 2 11l1.500 1.500" fill="none" stroke="#333" stroke-width=".9"/></svg></button></div>
          <div class="row"><input class="field name" aria-label="Cursor name" .value=${"Line 1"} /><span class="dot mark"></span>${spin("Cursor position", "10")}<button class="btn pm grow">+</button></div>
        </div></fieldset>
        ${cards.map(([c, v, k, hot]) => html`<div class="card ${k} ${hot ? "hot" : ""}"><span class="lab">(Output voltage)</span><span class="dot" style="background:${c}"></span>${spin("Position", v)}<button class="btn pm grow">-</button></div>`)}
      </section>`;
  }
}

@customElement("app-root")
class AppRoot extends LitElement {
  static styles = [base, css`
    :host { display: flex; height: 100vh; min-height: 760px; padding: 35px 51px 68px; background: #000; color: #1a1a1a; font: 12px/15px Inter, sans-serif; }
    .window { flex: 1; min-width: 0; display: flex; flex-direction: column; overflow: hidden; border-radius: 12px 12px 18px 18px; background: #fff; }
    .title { display: flex; align-items: center; gap: 8px; height: 29px; flex: none; padding-left: 8px; font-weight: 700; color: #4a4a4a; }
    .light { width: 13px; height: 13px; border-radius: 7px; }
    .r { background: #ff5f5d; } .y { background: #f9c22e; } .gr { background: #27c354; }
    .name { margin-left: 6px; }
    .body { flex: 1; min-height: 0; display: flex; }
    .explorer { display: flex; flex-direction: column; gap: 18px; width: 293px; flex: none; padding: 9px 9px 10px; background: #777; }
    .work { flex: 1; min-width: 0; display: flex; flex-direction: column; background: #999; }
    .tabs { display: flex; height: 43px; flex: none; padding: 0 3px 0 10px; }
    .add { width: 38px; height: 31px; border-radius: 3px; background: #c9c9c9; font-weight: 700; font-size: 14px; }
    .list { flex: 1; display: flex; justify-content: center; }
    .tab { display: flex; align-items: center; justify-content: space-between; width: 133px; padding: 0 9px 0 11px; background: #c9c9c9; border-bottom: 4px solid #00f; }
    .cols { flex: 1; min-height: 0; display: flex; padding-left: 10px; }
    .pane { flex: 1; min-width: 0; display: flex; flex-direction: column; background: #fff; border-left: 6px solid #eee; }
    .sub { display: flex; justify-content: center; height: 32px; flex: none; background: #eee; }
    .sub div { display: flex; align-items: center; padding: 0 10px 0 11px; background: #ccc; }
    .sub .cur { gap: 2px; border-bottom: 4px solid #00f; padding-right: 1px; }
    .sub .cur > button:nth-of-type(2) { margin-left: 10px; }
    .mini { width: 21px; height: 17px; background: #555; color: #fff; font-weight: 700; }
    .plots { flex: 1; min-height: 0; display: flex; gap: 20px; padding: 22px 19px 19px 29px; }
    plot-view { padding-bottom: 11px; }
    .statusbar { height: 19px; flex: none; border-top: 1px solid #d5d5d5; }
  `];
  render() {
    return html`<div class="window">
      <div class="title"><span class="light r"></span><span class="light y"></span><span class="light gr"></span><span class="name">JOINUS-D – project: SFQ-generator-example</span></div>
      <div class="body">
        <tool-rail></tool-rail>
        <div class="explorer">
          <file-panel heading="LibrePCB Workspace" .nodes=${workspace} .thumb=${84}></file-panel>
          <file-panel heading="SFQ-generator-example" .nodes=${project} .thumb=${69}></file-panel>
        </div>
        <div class="work">
          <div class="tabs"><button class="add">+</button><div class="list"><div class="tab"><button>SFQ-generator</button><button aria-label="Close tab">✕</button></div></div></div>
          <div class="cols">
            <dash-board></dash-board>
            <div class="pane">
              <div class="sub"><div><button>LibrePCB Netlist</button></div><div><button>SPICE Netlist</button></div><div class="cur"><button>FrugalPlot</button><button class="mini" aria-label="Detach"><svg width="9" height="9" viewBox="0 0 9 9"><path d="M1 8 7 2M3 1.500h4.500V6" fill="none" stroke="#fff" stroke-width="1.500"/></svg></button><button class="mini">×</button></div></div>
              <div class="plots"><plot-view></plot-view><plot-settings></plot-settings></div>
            </div>
          </div>
        </div>
      </div>
      <div class="statusbar"></div>
    </div>`;
  }
}
